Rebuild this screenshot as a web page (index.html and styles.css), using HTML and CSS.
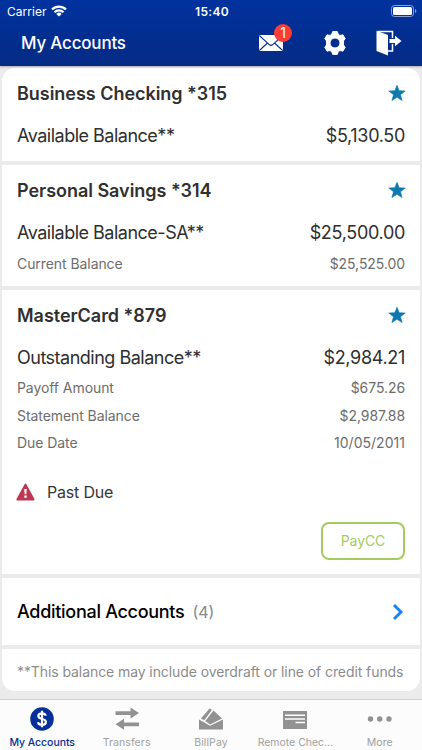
FILE: index.html
```html
<!DOCTYPE html>
<html lang="en">
<head>
<meta charset="utf-8">
<title>My Accounts</title>
<link rel="stylesheet" href="styles.css">
</head>
<body>
<div class="app">
  <header class="header">
    <div class="status">
      <div class="carrier"><span class="carrier-name">Carrier</span>
        <svg width="16" height="12" viewBox="0 0 16 12" fill="none" stroke="#fff" stroke-width="2.2"><path d="M1 4.4a10 10 0 0 1 14 0M3.5 7.3a6.4 6.4 0 0 1 9 0"/><path d="M8 11.6L5.3 8.9a3.8 3.8 0 0 1 5.4 0z" fill="#fff" stroke="none"/></svg>
      </div>
      <span class="time">15:40</span>
      <svg class="battery" width="26" height="12" viewBox="0 0 26 12"><rect x=".5" y=".5" width="22" height="11" rx="3" fill="none" stroke="#8f9fd2"/><rect x="2" y="2" width="19" height="8" rx="1.6" fill="#fff"/><path d="M24 4v4q1.4-.6 1.4-2T24 4z" fill="#8f9fd2"/></svg>
    </div>
    <div class="nav">
      <h1>My Accounts</h1>
      <div class="actions">
        <div class="mail">
          <svg width="24" height="16" viewBox="0 0 24 16"><path d="M0 0h24v16H0z" fill="#fff"/><path d="M.3 .5L10.5 9.8q1.5 1.2 3 0L23.7 .5M.3 15.5L8.5 8M23.7 15.5L15.5 8" fill="none" stroke="#062f91" stroke-width="1.1"/></svg>
          <span class="badge">1</span>
        </div>
        <svg class="gear" width="24" height="24" viewBox="0 0 24 24"><path fill="#fff" fill-rule="evenodd" d="M9.700.6h4.600q.4 2.900 2.300 3.600 1.200.5 3.300-.4l2.300 3.900q-1.900 1.500-1.900 4.300t1.900 4.300l-2.300 3.900q-2.100-.9-3.300-.4-1.900.7-2.300 3.600H9.700q-.4-2.900-2.300-3.600-1.200-.5-3.300.4l-2.300-3.900Q3.700 14.800 3.700 12T1.800 7.700l2.300-3.900q2.100.9 3.300.4Q9.300 3.500 9.700.6zM12 7a5 5 0 1 0 0 10 5 5 0 0 0 0-10z" stroke="#fff" stroke-width="1" stroke-linejoin="round"/></svg>
        <svg class="exit" width="26" height="26" viewBox="0 0 26 26"><path d="M2 1.500h14.500V8M16.500 14v7H12" fill="none" stroke="#fff" stroke-width="1.500"/><path d="M.5.800L12 5v20.500L.5 21z" fill="#fff"/><path d="M13.500 9H19V5.700l6.500 5.300-6.500 5.300V13h-5.500z" fill="#fff"/></svg>
      </div>
    </div>
  </header>

  <main class="accounts">
    <section class="card checking">
      <div class="title"><h2>Business Checking *315</h2><svg class="star" width="18" height="18" viewBox="0 0 18 18"><path d="M9 1.200l2.200 5.500 6 .3-4.700 3.700 1.600 5.900L9 13.300l-5.100 3.300 1.600-5.900L.8 7l6-.3z"/></svg></div>
      <div class="row main"><span>Available Balance**</span><span class="amount">$5,130.50</span></div>
    </section>
    <section class="card savings">
      <div class="title"><h2>Personal Savings *314</h2><svg class="star" width="18" height="18" viewBox="0 0 18 18"><path d="M9 1.200l2.200 5.500 6 .3-4.700 3.700 1.600 5.900L9 13.300l-5.100 3.300 1.600-5.900L.8 7l6-.3z"/></svg></div>
      <div class="row main"><span>Available Balance-SA**</span><span class="amount">$25,500.00</span></div>
      <div class="row sub"><span>Current Balance</span><span>$25,525.00</span></div>
    </section>
    <section class="card credit">
      <div class="title"><h2>MasterCard *879</h2><svg class="star" width="18" height="18" viewBox="0 0 18 18"><path d="M9 1.200l2.200 5.500 6 .3-4.700 3.700 1.600 5.900L9 13.300l-5.100 3.300 1.600-5.900L.8 7l6-.3z"/></svg></div>
      <div class="row main"><span>Outstanding Balance**</span><span class="amount">$2,984.21</span></div>
      <div class="row sub"><span>Payoff Amount</span><span>$675.26</span></div>
      <div class="row sub"><span>Statement Balance</span><span>$2,987.88</span></div>
      <div class="row sub"><span>Due Date</span><span class="date">10/05/2011</span></div>
      <div class="alert"><svg width="19" height="18" viewBox="0 0 19 18"><path d="M9.500 1.500L17.700 16.500H1.300z" fill="#bd3850" stroke="#bd3850" stroke-width="1.800" stroke-linejoin="round"/><path d="M8.200 6h2.600l-.5 5.300H8.700zM8.300 12.500h2.400v2.200H8.300z" fill="#fff"/></svg><span>Past Due</span></div>
      <button class="pay">PayCC</button>
    </section>
    <section class="card more">
      <span class="more-label">Additional Accounts</span><span class="count">(4)</span>
      <svg class="chevron" width="12" height="18" viewBox="0 0 12 18"><path d="M2 2l7 7-7 7" fill="none" stroke="#1683f5" stroke-width="2.900"/></svg>
    </section>
    <section class="card note"><span>**This balance may include overdraft or line of credit funds</span></section>
  </main>

  <nav class="tabs">
    <div class="tab active"><svg width="24" height="24" viewBox="0 0 24 24"><circle cx="12" cy="12" r="11.800" fill="#062f99"/><path d="M15.900 8.600C15.200 6.900 13.800 6.300 12 6.300c-2.200 0-3.700 1-3.700 2.700 0 4.100 7.600 1.800 7.600 5.900 0 1.800-1.600 2.900-3.900 2.900-2.200 0-3.600-.9-4.100-2.700M12 3.800v16.400" fill="none" stroke="#fff" stroke-width="2.200"/></svg><span>My Accounts</span></div>
    <div class="tab"><svg width="24" height="24" viewBox="0 0 24 24"><path d="M.5 4.200h15V.500L24 6l-8.500 5.500V8H.5zM24 15.500H9v-3.700L.5 17.300 9 22.800V19.300h15z"/></svg><span>Transfers</span></div>
    <div class="tab"><svg width="26" height="24" viewBox="0 0 26 24"><path d="M1 12.500L12 18.800l13-6.300v10H1zM3 11.500L11.500 1.500 14 2.800 6.300 13.200z"/><path d="M7.300 13.900L15.500 3.500 24 11.500 12 17.400z"/></svg><span>BillPay</span></div>
    <div class="tab"><svg width="24" height="24" viewBox="0 0 24 24"><path d="M0 4h24v18H0z"/><path d="M2 8.300h20M2 12h20M12.500 15.500H22" stroke="#fff" stroke-width="1.500"/></svg><span class="remote">Remote Chec...</span></div>
    <div class="tab"><svg width="26" height="24" viewBox="0 0 26 24"><circle cx="3.500" cy="12" r="2.700"/><circle cx="12.700" cy="12" r="2.700"/><circle cx="22" cy="12" r="2.700"/></svg><span>More</span></div>
  </nav>
</div>
</body>
</html>
```
FILE: styles.css
```css
* { box-sizing: border-box; }
body { margin: 0; font-family: Inter, "Liberation Sans", sans-serif; background: #ebebeb; }
h1, h2 { margin: 0; }
svg { display: block; flex: none; }
.app { width: 422px; height: 750px; display: flex; flex-direction: column; overflow: hidden; }
.header { height: 66px; flex: none; background: linear-gradient(#00329f, #052b84); color: #fff; box-shadow: 0 1px 2px #aaa; }
.status { height: 22px; display: grid; grid-template-columns: 1fr auto 1fr; align-items: center; padding: 0 5px 0 7px; }
.carrier { display: flex; align-items: center; gap: 4px; font-size: 12px; letter-spacing: .05px; }
.time { font-size: 12px; font-weight: 600; letter-spacing: .3px; }
.battery { justify-self: end; }
.nav { height: 42px; display: flex; align-items: center; justify-content: space-between; padding: 0 20px 0 21px; }
h1 { font-size: 17px; font-weight: 500; letter-spacing: -.2px; }
.actions { display: flex; align-items: center; }
.mail { position: relative; margin-right: 40px; }
.badge { position: absolute; left: 15px; top: -11px; width: 18px; height: 18px; border-radius: 50%; background: #fc3c35; font-size: 14px; line-height: 18px; text-align: center; }
.gear { margin-right: 29px; }
.accounts { flex: 1; padding: 2px 2px 0; display: flex; flex-direction: column; gap: 4px; }
.card { background: #fff; padding: 0 15px; flex: none; }
.checking { height: 93px; border-radius: 13px 13px 0 0; }
.savings { height: 121px; }
.credit { height: 284px; display: flex; flex-direction: column; }
.title { height: 50px; display: flex; align-items: center; justify-content: space-between; }
.title h2 { font-size: 18px; font-weight: 600; color: #303030; letter-spacing: -.03px; }
.star { fill: #0c79b0; stroke: #0c79b0; stroke-width: .6px; stroke-linejoin: round; margin-right: -1px; }
.row { display: flex; align-items: center; justify-content: space-between; }
.main { height: 35px; font-size: 18px; color: #2e2e2e; letter-spacing: -.5px; }
.amount { letter-spacing: -.32px; }
.sub { height: 27.5px; font-size: 14px; color: #6d6d6d; letter-spacing: -.07px; }
.date { letter-spacing: .03px; }
.savings .main { height: 35px; }
.savings .sub { height: 26px; }
.credit .main { height: 34px; }
.alert { height: 36px; margin-top: 17px; display: flex; align-items: center; gap: 12px; font-size: 16px; color: #363636; letter-spacing: -.2px; }
.alert svg { margin-left: -1px; }
.pay { align-self: flex-end; width: 84px; height: 38px; margin-top: 12px; padding: 0; border: 2px solid #a5cb5f; border-radius: 8px; background: #fff; color: #a5cb5f; font: 14px Inter, sans-serif; letter-spacing: -.1px; }
.more { height: 67px; display: flex; align-items: center; }
.more-label { font-size: 18px; font-weight: 500; letter-spacing: -.29px; }
.count { margin-left: 8px; font-size: 16px; color: #85888e; }
.chevron { margin-left: auto; margin-right: 1px; }
.note { height: 42px; border-radius: 0 0 13px 13px; display: flex; align-items: center; font-size: 14px; color: #8c8c8c; white-space: nowrap; padding-top: 3px; letter-spacing: -.085px; }
.tabs { height: 51px; flex: none; display: grid; grid-template-columns: repeat(5, 1fr); background: #fcfcfc; border-top: 1px solid #cfcfcf; }
.tab { display: flex; flex-direction: column; align-items: center; padding-top: 7px; gap: 4px; font-size: 10.500px; line-height: 15px; color: #a0a0a0; fill: #929292; white-space: nowrap; letter-spacing: .1px; }
.active { color: #062f99; font-weight: 500; letter-spacing: -.05px; }
.remote { letter-spacing: -.02px; }
```
